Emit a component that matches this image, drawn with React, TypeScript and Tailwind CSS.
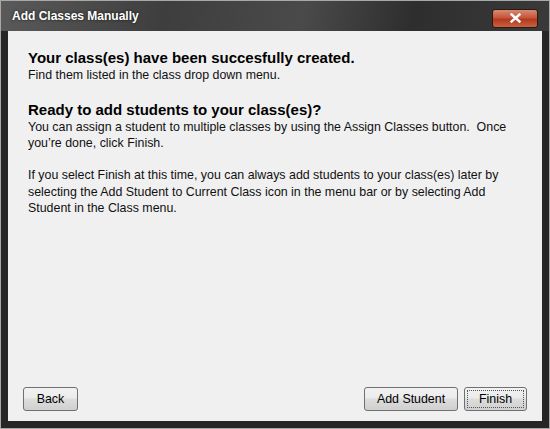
import React from 'react';

function DialogButton({ label, focused, className }: { label: string; focused?: boolean; className?: string }) {
  return (
    <button
      className={`relative h-[24px] rounded-[3px] border border-[#707070] bg-[linear-gradient(#f2f2f2_0%,#ebebeb_45%,#dddddd_50%,#cfcfcf_100%)] text-[12.4px] text-black ${
        focused ? 'border-[#3c7fb1] bg-[linear-gradient(#eaf6fd_0%,#d9f0fc_45%,#bee6fd_50%,#a7d9f5_100%)]' : ''
      } ${className ?? ''}`}
    >
      {focused && (
        <span className="pointer-events-none absolute inset-[2px] border border-dotted border-[#555]" />
      )}
      {label}
    </button>
  );
}

export default function App() {
  return (
    <div
      className="flex h-[429px] w-[550px] flex-col border border-[#a8a8a8] bg-[#262626]"
      style={{ fontFamily: '"Liberation Sans", Arial, sans-serif' }}
    >
      {/* Title bar */}
      <div className="flex h-[30px] shrink-0 items-center justify-between bg-[linear-gradient(100deg,#5a5a5a_0%,#3e3e3e_30%,#4a4a4a_55%,#2e2e2e_75%,#3a3a3a_100%)] pl-[11px] pr-[11px]">
        <span className="text-[12px] font-bold text-white [text-shadow:0_0_3px_rgba(0,0,0,0.8)]">
          Add Classes Manually
        </span>
        <div className="mt-[4px] flex h-[19px] w-[46px] items-center justify-center rounded-[3px] border border-[#2a1a14] bg-[linear-gradient(#d88a72_0%,#c7553a_45%,#b23a1f_55%,#c9613f_100%)]">
          <svg width="11" height="10" viewBox="0 0 11 10">
            <path d="M1.5 1.5 L9.5 8.5 M9.5 1.5 L1.5 8.5" stroke="white" strokeWidth="2.4" strokeLinecap="square" />
          </svg>
        </div>
      </div>

      {/* Content */}
      <div className="mx-[7px] mb-[7px] flex flex-1 flex-col bg-[#f0f0f0] px-[20px] pt-[17px] pb-[10px]">
        <h1 className="text-[15px] font-bold leading-[19px] text-black">
          Your class(es) have been succesfully created.
        </h1>
        <p className="text-[12.4px] leading-[16px] text-[#111]">Find them listed in the class drop down menu.</p>

        <h2 className="mt-[17px] text-[15px] font-bold leading-[19px] text-black">
          Ready to add students to your class(es)?
        </h2>
        <p className="text-[12.4px] leading-[16px] text-[#111]">
          You can assign a student to multiple classes by using the Assign Classes button.&nbsp; Once
          <br />
          you’re done, click Finish.
        </p>

        <p className="mt-[16px] text-[12.4px] leading-[16.5px] text-[#111]">
          If you select Finish at this time, you can always add students to your class(es) later by
          <br />
          selecting the Add Student to Current Class icon in the menu bar or by selecting Add
          <br />
          Student in the Class menu.
        </p>

        <div className="mt-auto flex items-center">
          <DialogButton label="Back" className="ml-[-5px] w-[55px]" />
          <div className="flex-1" />
          <DialogButton label="Add Student" className="w-[94px]" />
          <DialogButton label="Finish" focused className="ml-[6px] mr-[-5px] w-[63px]" />
        </div>
      </div>
    </div>
  );
}
